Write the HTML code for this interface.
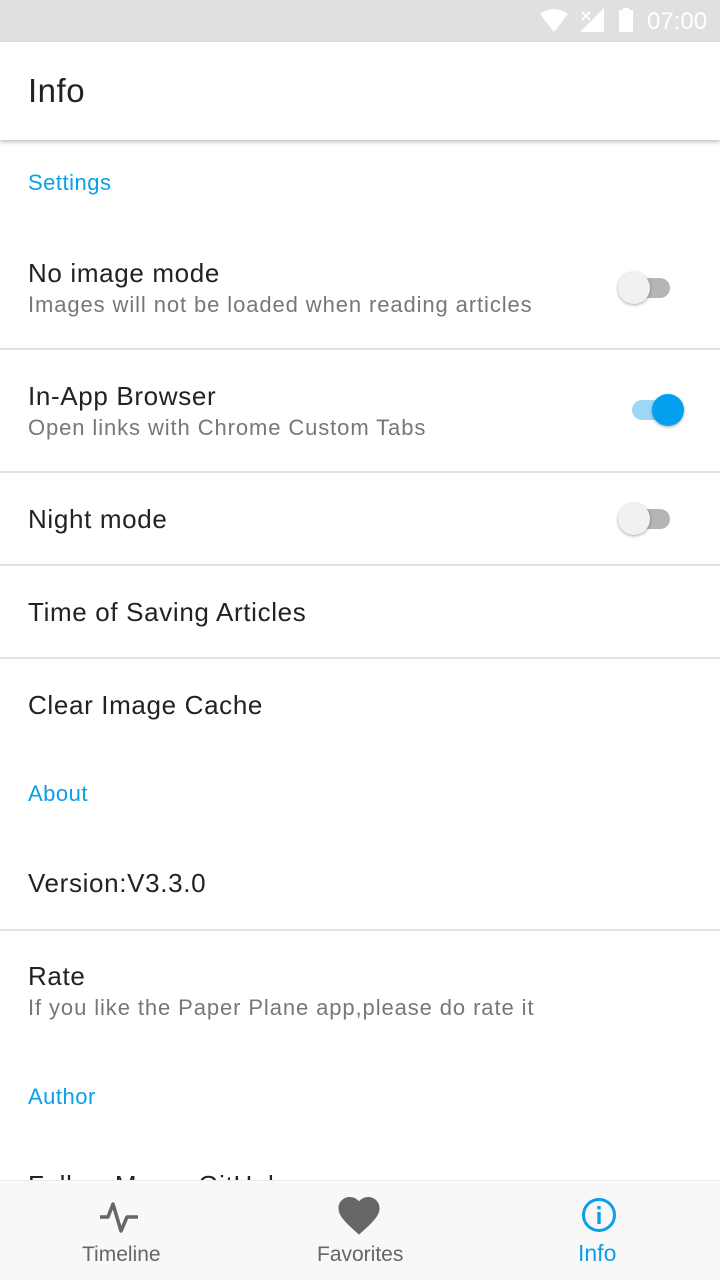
<!DOCTYPE html>
<html><head><meta charset="utf-8"><style>
*{margin:0;padding:0;box-sizing:border-box}
body{width:720px;height:1280px;overflow:hidden;background:#fff;font-family:"Liberation Sans",sans-serif;position:relative}
.a{position:absolute;white-space:nowrap;line-height:1}
.t{font-size:26px;color:#222;left:28px;letter-spacing:0.65px}
.s{font-size:22px;color:#777;left:28px;letter-spacing:0.9px}
.c{font-size:22px;color:#0aa0e8;left:28px;letter-spacing:0.5px}
.d{position:absolute;left:0;width:720px;height:2px;background:#e2e2e2}
.sw{position:absolute;width:36px;height:20px;border-radius:10px}
.k{position:absolute;width:32px;height:32px;border-radius:50%;box-shadow:0 1px 3px rgba(0,0,0,.35)}
</style></head><body>
<div style="position:absolute;top:0;left:0;width:720px;height:42px;background:#e0e0e0"></div>
<svg style="position:absolute;left:538px;top:8px" width="120" height="26" viewBox="0 0 120 26">
<path d="M2 6 Q16 -4 30 6 L16 24 Z" fill="#fff"/>
<path d="M42 24 L66 0 L66 24 Z" fill="#fff"/>
<path d="M44 4 L52 12 M52 4 L44 12" stroke="#fff" stroke-width="2"/>
<rect x="81" y="2" width="14" height="22" rx="1" fill="#fff"/><rect x="85" y="0" width="6" height="3" fill="#fff"/>
</svg>
<div class="a" style="left:647px;top:10px;font-size:24px;color:#fff">07:00</div>
<div style="position:absolute;top:42px;left:0;width:720px;height:98px;background:#fff;box-shadow:0 2px 4px rgba(0,0,0,.25)"></div>
<div class="a" style="left:28px;top:74px;font-size:33px;color:#222;letter-spacing:0.5px">Info</div>

<div class="a c" style="top:172px">Settings</div>
<div class="a t" style="top:260px">No image mode</div>
<div class="a s" style="top:294px">Images will not be loaded when reading articles</div>
<div class="sw" style="left:634px;top:278px;background:#b5b5b5"></div>
<div class="k" style="left:618px;top:272px;background:#f1f1f1"></div>
<div class="d" style="top:348px"></div>
<div class="a t" style="top:383px">In-App Browser</div>
<div class="a s" style="top:417px">Open links with Chrome Custom Tabs</div>
<div class="sw" style="left:632px;top:400px;background:#9fd8f7"></div>
<div class="k" style="left:652px;top:394px;background:#03a0ef"></div>
<div class="d" style="top:471px"></div>
<div class="a t" style="top:506px">Night mode</div>
<div class="sw" style="left:634px;top:509px;background:#b5b5b5"></div>
<div class="k" style="left:618px;top:503px;background:#f1f1f1"></div>
<div class="d" style="top:564px"></div>
<div class="a t" style="top:599px">Time of Saving Articles</div>
<div class="d" style="top:657px"></div>
<div class="a t" style="top:692px">Clear Image Cache</div>
<div class="a c" style="top:783px">About</div>
<div class="a t" style="top:870px">Version:V3.3.0</div>
<div class="d" style="top:929px"></div>
<div class="a t" style="top:963px">Rate</div>
<div class="a s" style="top:997px">If you like the Paper Plane app,please do rate it</div>
<div class="a c" style="top:1086px">Author</div>
<div class="a t" style="top:1172px">Follow Me on GitHub</div>

<div style="position:absolute;top:1180px;left:0;width:720px;height:100px;background:#f8f8f8;border-top:1px solid #eee"></div>
<svg style="position:absolute;left:100px;top:1198px" width="40" height="36" viewBox="0 0 40 36">
<path d="M0 19 H8 L13 6 L21 33 L27 19 H38" stroke="#666" stroke-width="3.5" fill="none" stroke-linejoin="round"/>
</svg>
<svg style="position:absolute;left:338px;top:1196px" width="42" height="40" viewBox="2 2.5 20 19.5">
<path d="M12 21.35l-1.45-1.32C5.4 15.36 2 12.28 2 8.5 2 5.420 4.42 3 7.5 3c1.74 0 3.41.81 4.5 2.09C13.09 3.81 14.76 3 16.5 3 19.58 3 22 5.42 22 8.5c0 3.780-3.4 6.860-8.550 11.54L12 21.35z" fill="#666"/>
</svg>
<svg style="position:absolute;left:581px;top:1197px" width="36" height="36" viewBox="0 0 36 36">
<circle cx="18" cy="18" r="15.5" stroke="#0aa0e8" stroke-width="3" fill="none"/>
<rect x="16.3" y="15" width="3.4" height="12" fill="#0aa0e8"/><rect x="16.3" y="9" width="3.4" height="3.4" fill="#0aa0e8"/>
</svg>
<div class="a" style="left:82px;top:1244px;font-size:21px;color:#666">Timeline</div>
<div class="a" style="left:317px;top:1244px;font-size:21px;color:#666">Favorites</div>
<div class="a" style="left:578px;top:1242px;font-size:23px;color:#0aa0e8">Info</div>
</body></html>
